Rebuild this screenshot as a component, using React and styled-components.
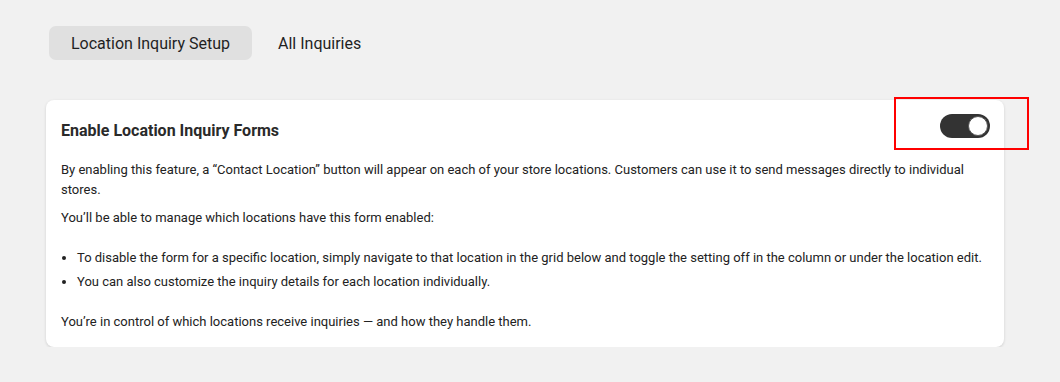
import React, { useState } from 'react';
import styled, { createGlobalStyle } from 'styled-components';

const GlobalStyle = createGlobalStyle`
  body {
    margin: 0;
    background: #f1f1f1;
    font-family: Roboto, "Liberation Sans", sans-serif;
    color: #222;
  }
`;

const Page = styled.div`
  padding: 26px 56px 0 46px;
  width: 1060px;
  box-sizing: border-box;
`;

const Tabs = styled.div`
  display: flex;
  gap: 4px;
  padding-left: 3px;
`;

const Tab = styled.button`
  height: 34px;
  padding: 0 22px;
  border: none;
  border-radius: 7px;
  background: ${({ active }) => (active ? '#e0e0e0' : 'transparent')};
  font-family: inherit;
  font-size: 16px;
  color: #1f1f1f;
  cursor: pointer;
`;

const Card = styled.section`
  position: relative;
  margin-top: 40px;
  width: 958px;
  box-sizing: border-box;
  padding: 14px 14px 15px 15px;
  background: #fff;
  border-radius: 8px;
  box-shadow: 0 1px 3px rgba(0, 0, 0, 0.14);
`;

const Header = styled.div`
  display: flex;
  justify-content: space-between;
  align-items: flex-start;
`;

const Title = styled.h2`
  margin: 7px 0 0;
  font-size: 16px;
  line-height: 20px;
  font-weight: 700;
  color: #2a2a2a;
`;

const Track = styled.button`
  position: relative;
  width: 50px;
  height: 24px;
  border: none;
  border-radius: 12px;
  padding: 0;
  background: ${({ on }) => (on ? '#333' : '#bbb')};
  cursor: pointer;
`;

const Knob = styled.span`
  position: absolute;
  top: 2px;
  left: ${({ on }) => (on ? '28px' : '2px')};
  width: 20px;
  height: 20px;
  border-radius: 50%;
  background: #fff;
  box-sizing: border-box;
  border: 1px solid #555;
`;

const Text = styled.p`
  margin: ${({ top }) => top}px 0 0;
  font-size: 13px;
  line-height: 20px;
`;

const List = styled.ul`
  margin: 20px 0 0;
  padding-left: 16px;
  font-size: 13px;
  line-height: 20px;
`;

const Item = styled.li`
  & + & {
    margin-top: 4px;
  }
`;

const Highlight = styled.div`
  position: absolute;
  left: 848px;
  top: -3px;
  width: 135px;
  height: 53px;
  box-sizing: border-box;
  border: 2px solid #f00;
  pointer-events: none;
`;

const App = () => {
  const [on, setOn] = useState(true);
  return (
    <>
      <GlobalStyle />
      <Page>
        <Tabs>
          <Tab active>Location Inquiry Setup</Tab>
          <Tab>All Inquiries</Tab>
        </Tabs>
        <Card>
          <Header>
            <Title>Enable Location Inquiry Forms</Title>
            <Track on={on} onClick={() => setOn(!on)}>
              <Knob on={on} />
            </Track>
          </Header>
          <Text top={19}>
            By enabling this feature, a “Contact Location” button will appear on each of your store
            locations. Customers can use it to send messages directly to individual stores.
          </Text>
          <Text top={8}>You’ll be able to manage which locations have this form enabled:</Text>
          <List>
            <Item>
              To disable the form for a specific location, simply navigate to that location in the
              grid below and toggle the setting off in the column or under the location edit.
            </Item>
            <Item>You can also customize the inquiry details for each location individually.</Item>
          </List>
          <Text top={20}>
            You’re in control of which locations receive inquiries — and how they handle them.
          </Text>
          <Highlight />
        </Card>
      </Page>
    </>
  );
};

export default App;
